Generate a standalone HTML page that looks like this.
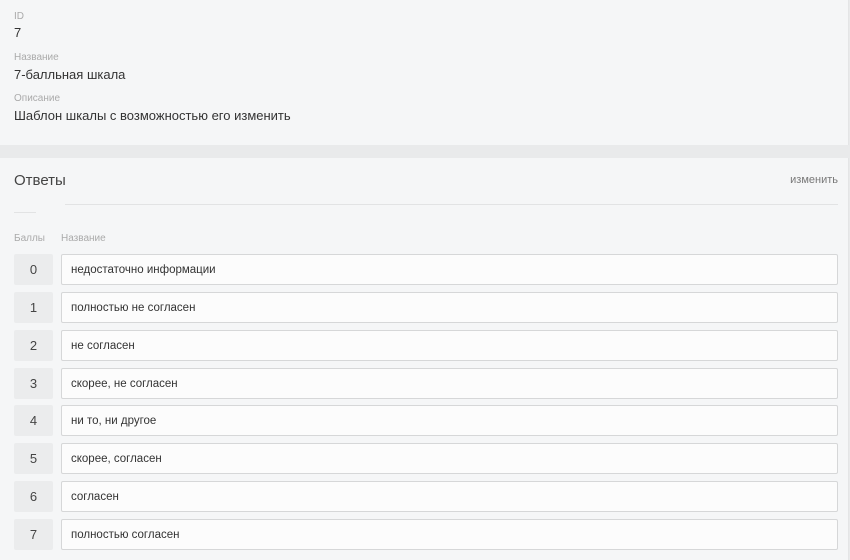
<!DOCTYPE html>
<html><head><meta charset="utf-8"><style>
body{margin:0;width:850px;height:560px;background:#e9eaeb;font-family:"Liberation Sans",sans-serif;overflow:hidden;position:relative}
.c1{position:absolute;left:0;top:0;width:848px;height:145px;background:#f5f6f7;border-right:1px solid #e4e5e6}
.c2{position:absolute;left:0;top:158px;width:848px;height:402px;background:#f5f6f7;border-right:1px solid #e4e5e6}
.l{position:absolute;left:14px;font-size:10px;color:#aaa}
.v{position:absolute;left:14px;font-size:13px;color:#333}
.n{position:absolute;left:14px;width:39px;height:31px;background:#ebeced;border-radius:2px;font-size:13px;color:#444;text-align:center;line-height:31px}
.i{position:absolute;left:61px;width:766px;height:29px;background:#fcfcfc;border:1px solid #d6d7d8;border-radius:2px;font-size:11.5px;color:#333;line-height:31px;padding-left:9px;box-sizing:content-box}
</style></head><body>
<div class="c1"></div><div class="c2"></div>
<div class="l" style="top:11px">ID</div><div class="v" style="top:25px">7</div>
<div class="l" style="top:52px">Название</div><div class="v" style="top:67px">7-балльная шкала</div>
<div class="l" style="top:93px">Описание</div><div class="v" style="top:108px">Шаблон шкалы с возможностью его изменить</div>
<div style="position:absolute;left:14px;top:172px;font-size:15px;color:#444">Ответы</div>
<div style="position:absolute;right:12px;top:174px;font-size:11px;color:#777">изменить</div>
<div style="position:absolute;left:65px;top:204px;width:773px;height:1px;background:#e2e3e4"></div>
<div style="position:absolute;left:14px;top:212px;width:22px;height:1px;background:#e2e3e4"></div>
<div class="l" style="top:233px">Баллы</div><div class="l" style="top:233px;left:61px">Название</div>
<div class="n" style="top:254px">0</div><div class="i" style="top:254px">недостаточно информации</div>
<div class="n" style="top:292px">1</div><div class="i" style="top:292px">полностью не согласен</div>
<div class="n" style="top:330px">2</div><div class="i" style="top:330px">не согласен</div>
<div class="n" style="top:368px">3</div><div class="i" style="top:368px">скорее, не согласен</div>
<div class="n" style="top:405px">4</div><div class="i" style="top:405px">ни то, ни другое</div>
<div class="n" style="top:443px">5</div><div class="i" style="top:443px">скорее, согласен</div>
<div class="n" style="top:481px">6</div><div class="i" style="top:481px">согласен</div>
<div class="n" style="top:519px">7</div><div class="i" style="top:519px">полностью согласен</div>
</body></html>
